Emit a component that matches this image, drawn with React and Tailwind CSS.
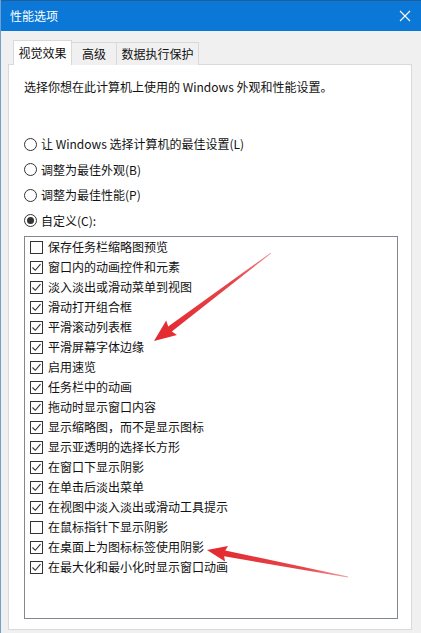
import React from "react";

const items = [
  ["保存任务栏缩略图预览", false],
  ["窗口内的动画控件和元素", true],
  ["淡入淡出或滑动菜单到视图", true],
  ["滑动打开组合框", true],
  ["平滑滚动列表框", true],
  ["平滑屏幕字体边缘", true],
  ["启用速览", true],
  ["任务栏中的动画", true],
  ["拖动时显示窗口内容", true],
  ["显示缩略图，而不是显示图标", true],
  ["显示亚透明的选择长方形", true],
  ["在窗口下显示阴影", true],
  ["在单击后淡出菜单", true],
  ["在视图中淡入淡出或滑动工具提示", true],
  ["在鼠标指针下显示阴影", false],
  ["在桌面上为图标标签使用阴影", true],
  ["在最大化和最小化时显示窗口动画", true],
];

function Radio({ checked, label }) {
  return (
    <div className="flex items-center h-[20px] gap-[4px]">
      <div className="w-[13px] h-[13px] rounded-full border border-[#333] bg-white flex items-center justify-center">
        {checked && <div className="w-[7px] h-[7px] rounded-full bg-[#333]" />}
      </div>
      <span className="leading-[20px]">{label}</span>
    </div>
  );
}

function Check({ checked, label }) {
  return (
    <div className="flex items-center h-[20px] pl-[5px] gap-[5px]">
      <div className="w-[13px] h-[13px] border border-[#333] bg-white flex items-center justify-center">
        {checked && (
          <svg width="11" height="11" viewBox="0 0 11 11">
            <path d="M1.5 5.5 L4.3 8.3 L9.5 2.2" fill="none" stroke="#333" strokeWidth="1.1" />
          </svg>
        )}
      </div>
      <span className="leading-[20px] whitespace-nowrap">{label}</span>
    </div>
  );
}

function arrowPoints(T, P, headLen, headHalf, baseHalf, tailHalf) {
  const dx = P[0] - T[0];
  const dy = P[1] - T[1];
  const L = Math.hypot(dx, dy);
  const ux = dx / L, uy = dy / L;
  const nx = -uy, ny = ux;
  const B = [P[0] - headLen * ux, P[1] - headLen * uy];
  const pts = [
    [T[0] + tailHalf * nx, T[1] + tailHalf * ny],
    [B[0] + baseHalf * nx, B[1] + baseHalf * ny],
    [B[0] + headHalf * nx - 2 * ux, B[1] + headHalf * ny - 2 * uy],
    P,
    [B[0] - headHalf * nx - 2 * ux, B[1] - headHalf * ny - 2 * uy],
    [B[0] - baseHalf * nx, B[1] - baseHalf * ny],
    [T[0] - tailHalf * nx, T[1] - tailHalf * ny],
  ];
  return pts.map((p) => p.map((v) => v.toFixed(1)).join(",")).join(" ");
}

export default function App() {
  return (
    <div
      className="relative w-[421px] h-[633px] overflow-hidden bg-[#f0f0f0] text-[12px] text-[#111] border-l border-[#6f9fcb] flex flex-col"
      style={{ fontFamily: '"Noto Sans CJK SC", "Noto Sans", sans-serif' }}
    >
      <div className="h-[31px] shrink-0 bg-[#0b78d7] border-t border-[#1f5e99] flex items-center justify-between pl-[9px] pr-[10px] text-white">
        <span className="text-[12px] leading-[16px]">性能选项</span>
        <svg width="12" height="12" viewBox="0 0 12 12">
          <path d="M1 1 L11 11 M11 1 L1 11" stroke="#fff" strokeWidth="1.1" />
        </svg>
      </div>
      <div className="flex-1 flex flex-col pt-[10px] pl-[7px] pr-[9px]">
        <div className="flex items-end h-[24px] pl-[5px] relative z-10 -mb-px">
          <div className="h-[25px] w-[59px] bg-white border border-b-0 border-[#d9d9d9] flex items-center justify-center pb-px">
            视觉效果
          </div>
          <div className="h-[23px] w-[45px] bg-[#f0f0f0] border-t border-r border-[#d9d9d9] flex items-center justify-center">
            高级
          </div>
          <div className="h-[23px] w-[82px] bg-[#f0f0f0] border-t border-r border-[#d9d9d9] flex items-center justify-center">
            数据执行保护
          </div>
        </div>
        <div className="h-[566px] bg-white border border-[#d9d9d9] pl-[15px] flex flex-col">
          <div className="mt-[14px] leading-[16px] h-[16px]">
            选择你想在此计算机上使用的 Windows 外观和性能设置。
          </div>
          <div className="mt-[39px] flex flex-col gap-[5.5px]">
            <Radio label="让 Windows 选择计算机的最佳设置(L)" />
            <Radio label="调整为最佳外观(B)" />
            <Radio label="调整为最佳性能(P)" />
            <Radio checked label="自定义(C):" />
          </div>
          <div className="mt-[5.5px] w-[374px] h-[383px] border border-[#828790] flex flex-col">
            {items.map(([label, c]) => (
              <Check key={label} label={label} checked={c} />
            ))}
          </div>
        </div>
      </div>
      <svg className="absolute inset-0 pointer-events-none" width="421" height="633">
        <defs>
          <linearGradient id="g1" x1="270" y1="253" x2="153" y2="341" gradientUnits="userSpaceOnUse">
            <stop offset="0" stopColor="#f08a8c" />
            <stop offset="0.3" stopColor="#e5474b" />
            <stop offset="1" stopColor="#e3282e" />
          </linearGradient>
          <linearGradient id="g2" x1="347" y1="577" x2="206" y2="550" gradientUnits="userSpaceOnUse">
            <stop offset="0" stopColor="#f3a3a5" />
            <stop offset="0.3" stopColor="#e5474b" />
            <stop offset="1" stopColor="#e3282e" />
          </linearGradient>
        </defs>
        <polygon points={arrowPoints([270, 253], [153, 341], 20, 9, 3, 0.4)} fill="url(#g1)" />
        <polygon points={arrowPoints([347, 577], [206, 550], 18, 8, 3, 0.4)} fill="url(#g2)" />
      </svg>
    </div>
  );
}
